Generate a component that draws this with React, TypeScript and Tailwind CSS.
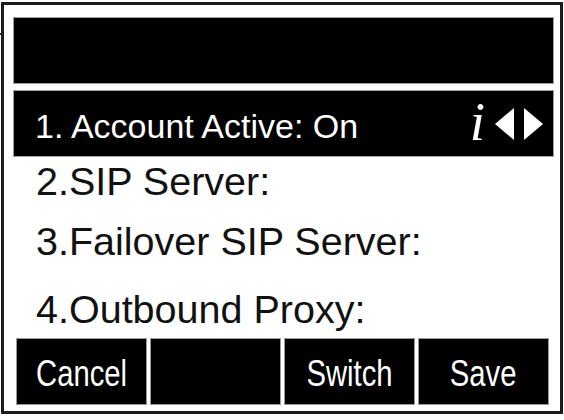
import React from "react";

const sans = { fontFamily: '"Liberation Sans", Arial, sans-serif' };

function SoftKey({ label }: { label?: string }) {
  return (
    <div className="flex h-[65px] w-[129px] items-center justify-center bg-black pt-[5px] text-[37px] text-white shadow-[0_0_0_1px_#9a9a9a]">
      {label && <span className="inline-block scale-x-[0.79] whitespace-nowrap leading-normal">{label}</span>}
    </div>
  );
}

function Arrows() {
  return (
    <div className="flex items-center gap-[10px]">
      <svg width="19" height="32" viewBox="0 0 19 32">
        <polygon points="0,16 19,0 19,32" fill="#fff" />
      </svg>
      <svg width="19" height="32" viewBox="0 0 19 32">
        <polygon points="19,16 0,0 0,32" fill="#fff" />
      </svg>
    </div>
  );
}

export default function App() {
  return (
    <div className="relative h-[420px] w-[564px] overflow-hidden bg-white pl-[1px] pt-[2px]" style={sans}>
      <div className="absolute left-0 top-[33px] h-[2px] w-[4px] bg-[#222]" />
      <div className="flex h-[412px] w-[562px] flex-col border-[3px] border-[#1c1c1c] pl-[10px] pr-[7px] pt-[13px]">
        <div className="h-[65px] bg-black shadow-[0_0_0_1px_#a0a0a0]" />

        <div className="mt-[8px] flex h-[65px] items-center bg-black pl-[21px] pr-[10px] text-white shadow-[0_0_0_1px_#a0a0a0]">
          <span className="whitespace-nowrap pt-[6px] text-[34px] leading-normal">1. Account Active: On</span>
          <span
            className="mb-[5px] ml-auto mr-[10px] text-[55px] italic leading-none"
            style={{ fontFamily: '"Liberation Serif", "Times New Roman", serif' }}
          >
            i
          </span>
          <Arrows />
        </div>

        <div className="mt-[6px] whitespace-nowrap pl-[22px] text-[39.5px] leading-[39px] text-[#111]">2.SIP Server:</div>
        <div className="mt-[21px] whitespace-nowrap pl-[22px] text-[39.5px] leading-[39px] text-[#111]">3.Failover SIP Server:</div>
        <div className="mt-[29px] whitespace-nowrap pl-[22px] text-[39.5px] leading-[39px] text-[#111]">4.Outbound Proxy:</div>

        <div className="mt-[10px] flex gap-[5px] pl-[3px]">
          <SoftKey label="Cancel" />
          <SoftKey />
          <SoftKey label="Switch" />
          <SoftKey label="Save" />
        </div>
      </div>
    </div>
  );
}
